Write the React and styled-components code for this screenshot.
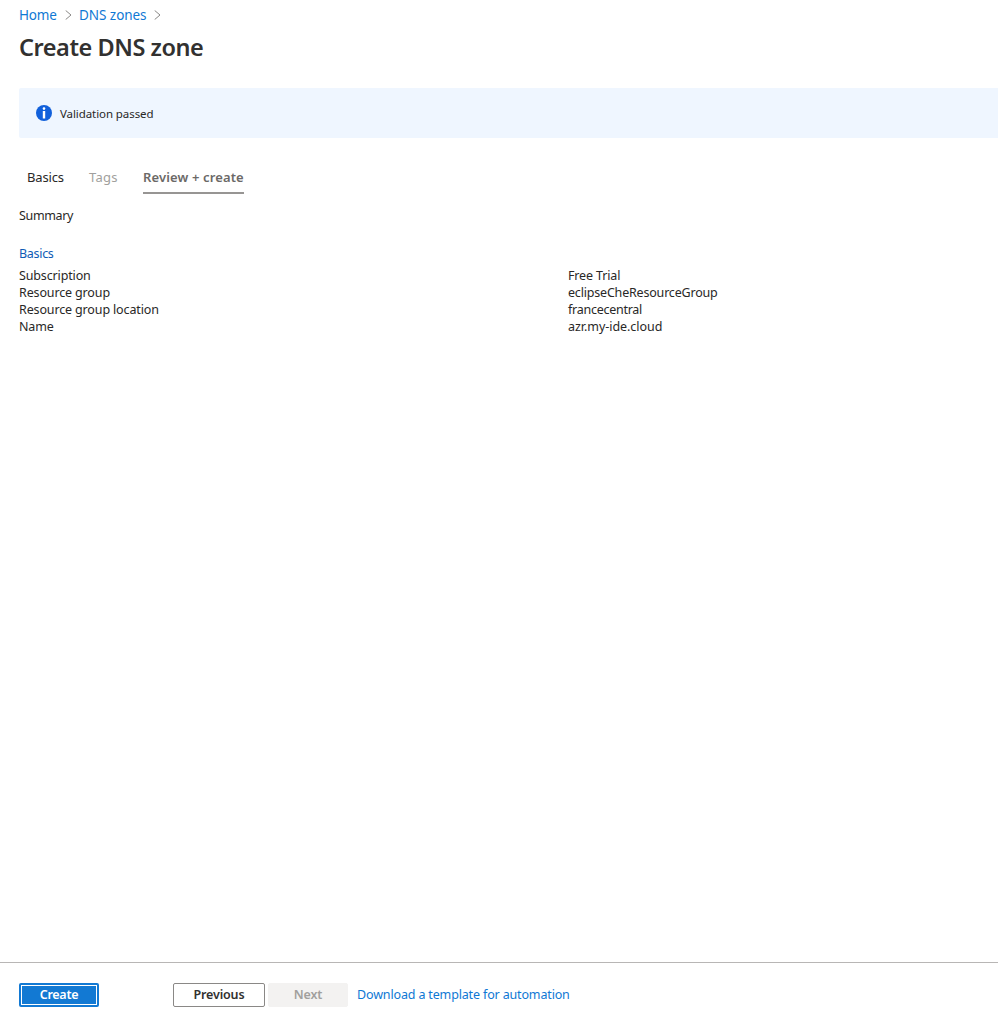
import React from 'react';
import styled, { createGlobalStyle } from 'styled-components';

const GlobalStyle = createGlobalStyle`
  * { box-sizing: border-box; }
  body {
    margin: 0;
    background: #fff;
    color: #292827;
    font: 12.5px/17px "Segoe UI", "Noto Sans", "Open Sans", sans-serif;
    overflow: hidden;
  }
`;

const Page = styled.div`
  height: 1020px;
  display: flex;
  flex-direction: column;
`;

const Content = styled.main`
  flex: 1;
  padding-left: 19px;
`;

const Label = styled.span`
  white-space: nowrap;
  letter-spacing: ${({ $track = 0 }) => $track}px;
`;

const Breadcrumb = styled.nav`
  display: flex;
  align-items: center;
  height: 30px;
  font-size: 13.5px;
`;

const Crumb = styled.a`
  color: #0f78d4;
  white-space: nowrap;
  width: ${({ $width }) => $width}px;
  letter-spacing: ${({ $track = 0 }) => $track}px;
`;

const Chevron = styled.svg`
  width: 7px;
  height: 10px;
  margin: 0 7px 0 8px;
  flex: none;
  fill: none;
  stroke: #8a8886;
`;

const Title = styled.h1`
  margin: 0;
  height: 58px;
  font-size: 23.5px;
  line-height: 34px;
  font-weight: 600;
  color: #323130;
`;

const Banner = styled.section`
  display: flex;
  align-items: center;
  gap: 8px;
  height: 50px;
  padding: 1px 0 0 17px;
  border-radius: 2px 0 0 2px;
  background: #eff6ff;
  font-size: 11.5px;

  svg { width: 16px; height: 16px; margin-bottom: 1px; }
`;

const Tabs = styled.div`
  display: flex;
  gap: 25px;
  padding: 29px 0 0 8px;
  font-size: 13px;
`;

const Tab = styled.div`
  width: ${({ $width }) => $width}px;
  height: 27px;
  line-height: 21px;
  white-space: nowrap;
  color: ${({ $color }) => $color || '#292827'};
  font-weight: ${({ $active }) => ($active ? 600 : 400)};
  border-bottom: 2px solid ${({ $active }) => ($active ? '#979593' : 'transparent')};
`;

const Summary = styled.div`
  margin-top: 13px;
`;

const SectionTitle = styled.div`
  margin: 21px 0 5px;
  color: #0f5bb5;
`;

const Row = styled.div`
  display: grid;
  grid-template-columns: 549px 1fr;
`;

const Footer = styled.footer`
  display: flex;
  align-items: flex-start;
  height: 58px;
  padding: 20px 0 0 19px;
  border-top: 1px solid #b8b6b5;
`;

const Button = styled.button`
  width: ${({ $width = 80 }) => $width}px;
  height: 24px;
  padding: 0;
  font: inherit;
  font-weight: 600;
  line-height: 18px;
  border-radius: 2px;
  border: 1px solid #8a8886;
  background: #fff;
  color: #323130;
`;

const PrimaryButton = styled(Button)`
  margin-right: 74px;
  border: 2px solid #1279d3;
  background: #1279d3;
  box-shadow: inset 0 0 0 1px #fff;
  color: #fff;
`;

const DisabledButton = styled(Button)`
  margin: 0 9px 0 3px;
  border-color: #f3f2f1;
  background: #f3f2f1;
  color: #a19f9d;
`;

const TemplateLink = styled.a`
  line-height: 23px;
  color: #0f78d4;
`;

const Separator = () => (
  <Chevron viewBox="0 0 7 10"><path d="M.7.5 6 5 .7 9.5" /></Chevron>
);

const rows = [
  { name: 'Subscription', value: 'Free Trial', track: -0.14 },
  { name: 'Resource group', value: 'eclipseCheResourceGroup', track: -0.19 },
  { name: 'Resource group location', value: 'francecentral', track: -0.26 },
  { name: 'Name', value: 'azr.my-ide.cloud', track: -0.04 },
];

export default function App() {
  return (
    <Page>
      <GlobalStyle />
      <Content>
        <Breadcrumb>
          <Crumb $width={38} $track={-0.2}>Home</Crumb>
          <Separator />
          <Crumb $width={67} $track={-0.05}>DNS zones</Crumb>
          <Separator />
        </Breadcrumb>
        <Title><Label $track={-0.45}>Create DNS zone</Label></Title>
        <Banner>
          <svg viewBox="0 0 16 16">
            <circle cx="8" cy="8" r="8" fill="#1160db" />
            <circle cx="8" cy="3.6" r="1.3" fill="#fff" />
            <path d="M6.8 6h2.4v7.5H6.8z" fill="#fff" />
          </svg>
          <Label $track={-0.08}>Validation passed</Label>
        </Banner>
        <Tabs>
          <Tab $width={37}><Label $track={-0.15}>Basics</Label></Tab>
          <Tab $width={29} $color="#a19f9d"><Label $track={0.25}>Tags</Label></Tab>
          <Tab $width={101} $color="#6b6967" $active><Label $track={0.13}>Review + create</Label></Tab>
        </Tabs>
        <Summary><Label $track={-0.35}>Summary</Label></Summary>
        <SectionTitle><Label $track={-0.3}>Basics</Label></SectionTitle>
        {rows.map(({ name, value, track }) => (
          <Row key={name}>
            <Label $track={-0.14}>{name}</Label>
            <Label $track={track}>{value}</Label>
          </Row>
        ))}
      </Content>
      <Footer>
        <PrimaryButton><Label $track={-0.25}>Create</Label></PrimaryButton>
        <Button $width={92}><Label $track={-0.17}>Previous</Label></Button>
        <DisabledButton><Label $track={-0.1}>Next</Label></DisabledButton>
        <TemplateLink><Label $track={-0.15}>Download a template for automation</Label></TemplateLink>
      </Footer>
    </Page>
  );
}
